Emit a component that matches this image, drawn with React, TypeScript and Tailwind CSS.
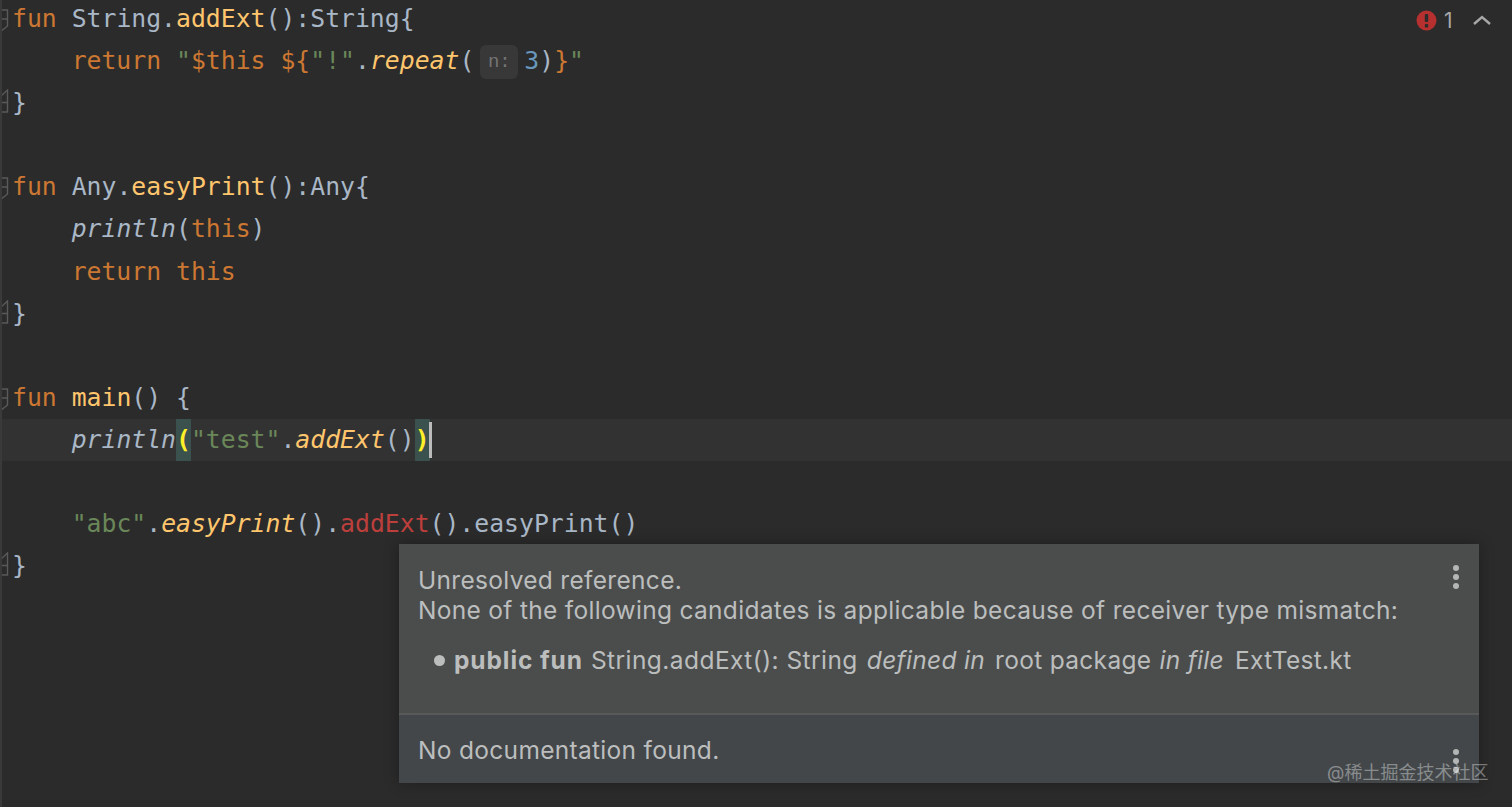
import type { ReactNode } from "react";

const mono = "font-['DejaVu_Sans_Mono','Liberation_Mono',monospace]";

const P = ({ children }: { children: ReactNode }) => <span className="text-[#a9b7c6]">{children}</span>;
const K = ({ children }: { children: ReactNode }) => <span className="text-[#cc7832]">{children}</span>;
const F = ({ children }: { children: ReactNode }) => <span className="text-[#ffc66d]">{children}</span>;
const FI = ({ children }: { children: ReactNode }) => <span className="text-[#ffc66d] italic">{children}</span>;
const I = ({ children }: { children: ReactNode }) => <span className="text-[#a9b7c6] italic">{children}</span>;
const S = ({ children }: { children: ReactNode }) => <span className="text-[#6a8759]">{children}</span>;

const FoldMark = ({ end }: { end?: boolean }) => (
  <svg width="9" height="28" viewBox="0 0 9 28" fill="none" stroke="#5a5a5a" strokeWidth="1.4" className="shrink-0">
    {end ? (
      <path d="M0 8 L7.5 1 V23 H0 M0 13.5 H7" />
    ) : (
      <path d="M0 5 H7.5 V21 L0 27 M0 14 H7" />
    )}
  </svg>
);

const Line = ({ children, fold, end }: { children?: ReactNode; fold?: boolean; end?: boolean }) => (
  <div className="flex h-[42.08px] items-center">
    <div className="flex w-[12px] shrink-0 items-center">{fold ? <FoldMark end={end} /> : null}</div>
    <div className="whitespace-pre">{children}</div>
  </div>
);

const Dots = () => (
  <div className="flex flex-col gap-[3px]">
    <span className="size-[6px] rounded-full bg-[#b4b6b6]" />
    <span className="size-[6px] rounded-full bg-[#b4b6b6]" />
    <span className="size-[6px] rounded-full bg-[#b4b6b6]" />
  </div>
);

const Match = ({ children }: { children: ReactNode }) => (
  <span className="inline-block h-[42px] bg-[#3b514d] font-bold leading-[42px] text-[#ffef28]">{children}</span>
);

export default function App() {
  return (
    <div className="relative h-[807px] w-[1512px] overflow-hidden border-l-2 border-[#3a3a3a] bg-[#2b2b2b]">
      <div className={`-ml-[2px] -mt-[2px] text-[24.78px] leading-[42px] ${mono}`}>
        <Line fold>
          <K>fun </K>
          <P>String.</P>
          <F>addExt</F>
          <P>():String{"{"}</P>
        </Line>
        <Line>
          <K>    return </K>
          <S>"</S>
          <K>$this</K>
          <S> </S>
          <K>{"${"}</K>
          <S>"!"</S>
          <P>.</P>
          <FI>repeat</FI>
          <P>(</P>
          <span className="ml-[6px] mr-[6px] inline-block h-[34px] w-[38px] rounded-md bg-[#383838] text-center align-middle font-['Liberation_Mono',monospace] text-[19px] leading-[34px] text-[#747474]">
            n:
          </span>
          <span className="text-[#6897bb]">3</span>
          <P>)</P>
          <K>{"}"}</K>
          <S>"</S>
        </Line>
        <Line fold end>
          <P>{"}"}</P>
        </Line>
        <Line />
        <Line fold>
          <K>fun </K>
          <P>Any.</P>
          <F>easyPrint</F>
          <P>():Any{"{"}</P>
        </Line>
        <Line>
          <P>    </P>
          <I>println</I>
          <P>(</P>
          <K>this</K>
          <P>)</P>
        </Line>
        <Line>
          <K>    return this</K>
        </Line>
        <Line fold end>
          <P>{"}"}</P>
        </Line>
        <Line />
        <Line fold>
          <K>fun </K>
          <F>main</F>
          <P>() {"{"}</P>
        </Line>
        <div className="flex h-[42.08px] items-center bg-[#323232]">
          <div className="w-[12px] shrink-0" />
          <div className="flex items-center whitespace-pre">
            <P>    </P>
            <I>println</I>
            <Match>(</Match>
            <S>"test"</S>
            <P>.</P>
            <FI>addExt</FI>
            <P>()</P>
            <Match>)</Match>
            <span className="-ml-px h-[36px] w-[3px] bg-[#bbbbbb]" />
          </div>
        </div>
        <Line />
        <Line>
          <P>    </P>
          <S>"abc"</S>
          <P>.</P>
          <FI>easyPrint</FI>
          <P>().</P>
          <span className="text-[#bc3f3c]">addExt</span>
          <P>().easyPrint()</P>
        </Line>
        <Line fold end>
          <P>{"}"}</P>
        </Line>
      </div>

      {/* inspection widget */}
      <div className="absolute left-[1414px] top-[10px] flex items-center font-['Inter',sans-serif]">
        <svg width="21" height="21" viewBox="0 0 21 21">
          <circle cx="10.5" cy="10.5" r="10" fill="#b5302f" />
          <rect x="8.8" y="4" width="3.4" height="8" rx="1" fill="#2b2b2b" />
          <rect x="8.8" y="14" width="3.4" height="3.4" rx="1" fill="#2b2b2b" />
        </svg>
        <span className="ml-[7px] text-[21px] leading-[21px] text-[#a8a8a8]">1</span>
        <svg width="18" height="10" viewBox="0 0 18 10" fill="none" stroke="#a8a8a8" strokeWidth="2.4" className="ml-[20px] -mt-[2px]">
          <path d="M1 9 L9 2 L17 9" />
        </svg>
      </div>

      {/* error popup */}
      <div className="absolute left-[397px] top-[544px] flex h-[239px] w-[1080px] flex-col font-['Inter',sans-serif] text-[24.5px] tracking-[0.31px] text-[#bcbebe] shadow-[0_0_14px_rgba(0,0,0,0.3)]">
        <div className="relative h-[171px] border-b-2 border-[#585a5a] bg-[#4b4d4d] px-[19px] pt-[21px] leading-[30px]">
          <div>Unresolved reference.</div>
          <div className="whitespace-nowrap">None of the following candidates is applicable because of receiver type mismatch:</div>
          <div className="mt-[20px] flex items-center whitespace-pre pl-[16px]">
            <span className="mr-[9px] size-[11px] rounded-full bg-[#bcbebe]" />
            <b className="font-bold tracking-[0.9px]">public fun</b>
            <span className="ml-[8px] tracking-[0.44px]">String.addExt(): String</span>
            <i className="ml-[9px]">defined in</i>
            <span className="ml-[10px]">root package</span>
            <i className="ml-[8px]">in file</i>
            <span className="ml-[11px]">ExtTest.kt</span>
          </div>
          <div className="absolute right-[20px] top-[21px]">
            <Dots />
          </div>
        </div>
        <div className="relative flex-1 bg-[#43474a] px-[19px] pt-[20px] leading-[30px]">
          <div>No documentation found.</div>
          <div className="absolute right-[20px] top-[34px]">
            <Dots />
          </div>
        </div>
      </div>

      {/* watermark */}
      <div className="absolute left-[1325px] top-[762px] font-['Inter','Noto_Sans_CJK_SC',sans-serif] text-[18px] leading-[22px] text-[rgba(255,255,255,0.38)]">
        @稀土掘金技术社区
      </div>
    </div>
  );
}
